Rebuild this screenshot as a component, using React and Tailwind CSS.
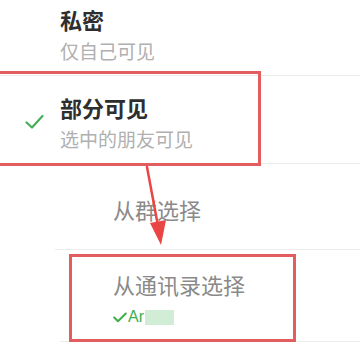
import React from 'react';

const font = { fontFamily: '"Noto Sans CJK SC", "Noto Sans", sans-serif' };

const Divider = ({ className = '' }) => <div className={`h-px bg-[#ececec] ${className}`} />;

const App = () => {
  return (
    <div className="relative w-[360px] h-[360px] overflow-hidden bg-white" style={font}>
      {/* 私密 */}
      <div className="pl-[60px] pt-[5px] pb-[12px]">
        <div className="text-[22px] leading-[28px] font-bold text-[#2e2e2e]">私密</div>
        <div className="mt-[6px] text-[19px] leading-[24px] text-[#b0b0b0]">仅自己可见</div>
      </div>
      <Divider />

      {/* 部分可见 */}
      <div className="relative pl-[60px] pt-[17px] pb-[12px]">
        <svg className="absolute left-[25px] top-[38px]" width="19" height="16" viewBox="0 0 19 16">
          <path d="M1.5 8.5 L7 13.5 L17.5 2" fill="none" stroke="#45b058" strokeWidth="2.2" strokeLinecap="round" strokeLinejoin="round" />
        </svg>
        <div className="text-[22px] leading-[28px] font-bold text-[#2e2e2e]">部分可见</div>
        <div className="mt-[6px] text-[19px] leading-[24px] text-[#b0b0b0]">选中的朋友可见</div>
      </div>
      <Divider />

      {/* 从群选择 */}
      <div className="pl-[113px] pt-[31px] pb-[26px]">
        <div className="text-[22px] leading-[28px] text-[#8a8a8a]">从群选择</div>
      </div>
      <Divider className="ml-[55px]" />

      {/* 从通讯录选择 */}
      <div className="pl-[113px] pt-[20px] pb-[14px]">
        <div className="text-[22px] leading-[28px] text-[#8a8a8a]">从通讯录选择</div>
        <div className="mt-[9px] flex items-center h-[20px]">
          <svg width="14" height="11" viewBox="0 0 14 11" className="mr-[1px]">
            <path d="M1.2 5.5 L5 9.3 L12.8 1.5" fill="none" stroke="#3fae4c" strokeWidth="2" strokeLinecap="round" strokeLinejoin="round" />
          </svg>
          <span className="text-[16px] leading-[20px] text-[#3fae4c]" style={{ fontFamily: '"Liberation Sans", Arial, sans-serif' }}>Ar</span>
          <span className="ml-[1px] w-[29px] h-[15px] bg-[#d2edd5]" />
        </div>
      </div>
      <Divider className="ml-[60px]" />
      <div className="pl-[113px] pt-[18px]">
        <div className="text-[22px] leading-[28px] text-[#e2e2e2]">从标签选择</div>
      </div>

      {/* annotations */}
      <div className="absolute left-[-4px] top-[71px] w-[265px] h-[95px] border-[3px] border-[#e25d5f]" />
      <div className="absolute left-[69px] top-[254px] w-[227px] h-[88px] border-[3px] border-[#e25d5f]" />
      <svg className="absolute left-0 top-0 pointer-events-none" width="360" height="360" viewBox="0 0 360 360">
        <line x1="147" y1="167" x2="158" y2="226" stroke="#ea4444" strokeWidth="2.5" strokeLinecap="round" />
        <path d="M150 223 L166 220 L161 245 Z" fill="#ea4444" />
      </svg>
    </div>
  );
};

export default App;
